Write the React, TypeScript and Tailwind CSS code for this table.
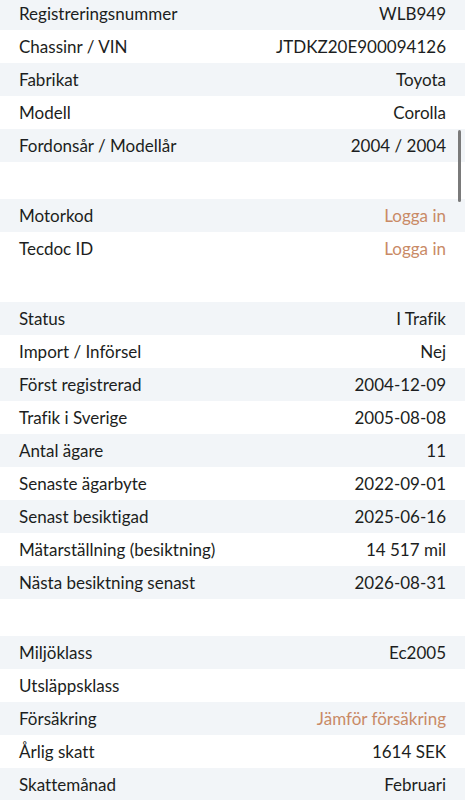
import React from 'react';

type Row = { label: string; value?: string; link?: boolean };

const groups: Row[][] = [
  [
    { label: 'Registreringsnummer', value: 'WLB949' },
    { label: 'Chassinr / VIN', value: 'JTDKZ20E900094126' },
    { label: 'Fabrikat', value: 'Toyota' },
    { label: 'Modell', value: 'Corolla' },
    { label: 'Fordonsår / Modellår', value: '2004 / 2004' },
  ],
  [
    { label: 'Motorkod', value: 'Logga in', link: true },
    { label: 'Tecdoc ID', value: 'Logga in', link: true },
  ],
  [
    { label: 'Status', value: 'I Trafik' },
    { label: 'Import / Införsel', value: 'Nej' },
    { label: 'Först registrerad', value: '2004-12-09' },
    { label: 'Trafik i Sverige', value: '2005-08-08' },
    { label: 'Antal ägare', value: '11' },
    { label: 'Senaste ägarbyte', value: '2022-09-01' },
    { label: 'Senast besiktigad', value: '2025-06-16' },
    { label: 'Mätarställning (besiktning)', value: '14 517 mil' },
    { label: 'Nästa besiktning senast', value: '2026-08-31' },
  ],
  [
    { label: 'Miljöklass', value: 'Ec2005' },
    { label: 'Utsläppsklass' },
    { label: 'Försäkring', value: 'Jämför försäkring', link: true },
    { label: 'Årlig skatt', value: '1614 SEK' },
    { label: 'Skattemånad', value: 'Februari' },
  ],
];

export default function App() {
  return (
    <div
      className="relative h-[800px] w-full overflow-hidden bg-white text-[17px] text-[#1c1e21] [font-variant-ligatures:none]"
      style={{ fontFamily: 'Lato, "Noto Sans", sans-serif' }}
    >
      <div className="-mt-[3px] flex flex-col gap-[37px]">
        {groups.map((rows, g) => (
          <div key={g} className="flex flex-col">
            {rows.map((row, i) => (
              <div
                key={row.label}
                className={`flex h-[33px] items-center justify-between px-[19px] ${
                  i % 2 === 0 ? 'bg-[#f2f5f8]' : 'bg-white'
                }`}
              >
                <span>{row.label}</span>
                {row.value && (
                  <span className={row.link ? 'text-[#c98a66]' : ''}>{row.value}</span>
                )}
              </div>
            ))}
          </div>
        ))}
      </div>

      {/* scroll indicator */}
      <div className="absolute left-[458px] top-[130px] h-[72px] w-[3px] rounded-full bg-[#7a7a7a]" />
    </div>
  );
}
